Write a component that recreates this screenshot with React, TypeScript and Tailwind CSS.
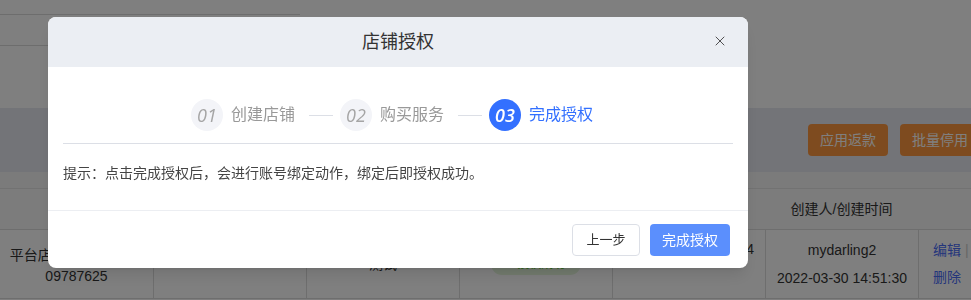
import React from 'react';
import { X } from 'lucide-react';

const font = { fontFamily: '"Liberation Sans", "Noto Sans CJK SC", sans-serif' };

const steps = [
  { no: '01', label: '创建店铺', active: false },
  { no: '02', label: '购买服务', active: false },
  { no: '03', label: '完成授权', active: true },
];

const StepBar: React.FC = () => (
  <div className="flex items-center justify-center pr-[12px]">
    {steps.map((s, i) => (
      <React.Fragment key={s.no}>
        {i > 0 && <div className="ml-[14px] mr-[7px] h-px w-[24px] bg-[#dcdfe6]" />}
        <div className="flex items-center gap-[8px]">
          <div
            className={`flex h-[32px] w-[32px] items-center justify-center rounded-full text-[18px] italic ${
              s.active ? 'bg-[#3370ff] font-semibold text-white' : 'bg-[#f3f4f8] text-[#a5a5a5]'
            }`}
            style={{ fontFamily: '"Open Sans", sans-serif' }}
          >
            {s.no}
          </div>
          <span className={`text-[16px] ${s.active ? 'text-[#3370ff]' : 'text-[#999]'}`}>{s.label}</span>
        </div>
      </React.Fragment>
    ))}
  </div>
);

const AuthModal: React.FC = () => (
  <div className="fixed inset-0 bg-black/50">
    <div className="absolute left-[48px] top-[17px] w-[700px] overflow-hidden rounded-[8px] bg-white shadow-lg">
      <div className="relative flex h-[50px] items-center justify-center bg-[#ebeef3]">
        <h3 className="text-[18px] text-[#333]">店铺授权</h3>
        <button className="absolute right-[20px] top-[16px] text-[#444]">
          <X size={16} strokeWidth={1.4} />
        </button>
      </div>
      <div className="px-[15px] pt-[32px]">
        <StepBar />
        <div className="mt-[12px] border-t border-[#dcdfe6]" />
        <p className="py-[19px] pb-[27px] text-[14px] leading-[20px] text-[#444]">
          提示：点击完成授权后，会进行账号绑定动作，绑定后即授权成功。
        </p>
      </div>
      <div className="flex justify-end gap-[10px] border-t border-[#eceef2] pb-[12px] pr-[18px] pt-[13px]">
        <button className="h-[32px] w-[68px] rounded-[4px] border border-[#dcdfe6] bg-white text-[13px] text-[#333]">
          上一步
        </button>
        <button className="h-[32px] w-[80px] rounded-[4px] bg-[#5b8ffd] text-[14px] text-white">完成授权</button>
      </div>
    </div>
  </div>
);

export default function App() {
  return (
    <div className="relative h-[300px] w-full overflow-hidden bg-white text-[#333]" style={font}>
      {/* page behind the dialog */}
      <div className="h-[108px]">
        <div className="h-[15px] w-[300px] border-b border-[#dadada]" />
        <div className="h-[31px] w-[300px] border-b border-[#dadada]" />
      </div>
      <div className="flex h-[64px] items-center justify-end gap-[12px] bg-[#e6e8f0]">
        <button className="h-[32px] w-[80px] rounded-[4px] bg-[#fd973f] text-[14px] text-white">应用返款</button>
        <button className="-mr-[9px] h-[32px] w-[80px] shrink-0 rounded-[4px] bg-[#fd973f] text-[14px] text-white">批量停用</button>
      </div>
      <div className="h-[16px] bg-[#f6f6f6]" />
      <div className="grid grid-cols-[153px_153px_153px_153px_153px_153px_1fr] border-t border-[#e4e4e4] text-[14px]">
        <div className="col-span-5 h-[40px] bg-[#f8f8f8]" />
        <div className="flex h-[40px] items-center justify-center bg-[#f8f8f8]">创建人/创建时间</div>
        <div className="h-[40px] bg-[#f8f8f8]" />

        <div className="flex h-[70px] flex-col items-center justify-center border-y border-[#dcdcdc] px-[2px] pt-[4px] text-center leading-[21px]">
          <span>平台店铺名称：测试 |</span>
          <span>09787625</span>
        </div>
        <div className="h-[70px] border-y border-l border-[#dcdcdc]" />
        <div className="flex h-[70px] items-center justify-center border-y border-l border-[#dcdcdc]">测试</div>
        <div className="flex h-[70px] items-center justify-center border-y border-l border-[#dcdcdc]">
          <span className="rounded-full bg-[#e5f6dc] px-[16px] py-[2px] text-[12px] text-[#52c41a]">● 授权成功</span>
        </div>
        <div className="flex h-[70px] items-start justify-center border-y border-l border-[#dcdcdc] pt-[9px]">
          2022-03-30 14:51:34
        </div>
        <div className="flex h-[70px] flex-col items-center justify-center gap-[7px] border-y border-l border-[#dcdcdc] leading-[21px]">
          <span>mydarling2</span>
          <span>2022-03-30 14:51:30</span>
        </div>
        <div className="flex h-[70px] flex-col justify-center gap-[6px] border-y border-l border-[#dcdcdc] pl-[14px] leading-[21px] text-[#4a6cf7]">
          <span>
            编辑 <span className="text-[#ccc]">|</span>
          </span>
          <span>删除</span>
        </div>
      </div>

      <AuthModal />
    </div>
  );
}
